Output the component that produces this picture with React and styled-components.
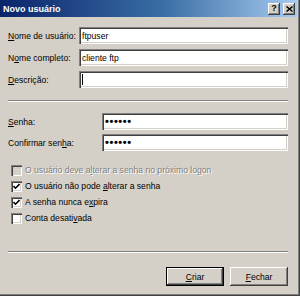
import React from "react";
import styled, { createGlobalStyle } from "styled-components";

const Global = createGlobalStyle`
  html, body { margin: 0; padding: 0; background: #d4d0c8; }
  body { font-family: "Liberation Sans", Arial, sans-serif; }
`;

const Window = styled.div`
  width: 300px;
  height: 296px;
  box-sizing: border-box;
  padding: 0 3px 3px 0;
  background: #d4d0c8;
  box-shadow: inset -1px -1px #404040, inset -2px -2px #808080;
  display: flex;
  flex-direction: column;
  font-size: 8.6px;
  color: #000;
`;

const TitleBar = styled.div`
  height: 17px;
  flex: none;
  display: flex;
  align-items: center;
  padding: 0 2px 0 3px;
  background: linear-gradient(to right, #0a246a 0%, #3a6ea5 55%, #a6caf0 100%);
`;

const Title = styled.div`
  flex: 1;
  color: #fff;
  font-weight: bold;
  font-size: 9px;
`;

const TitleButton = styled.div`
  width: 12px;
  height: 12px;
  margin-left: ${(p) => (p.$gap ? "3px" : "0")};
  box-sizing: border-box;
  background: #d4d0c8;
  box-shadow: inset -1px -1px #404040, inset 1px 1px #fff, inset -2px -2px #808080;
  display: flex;
  align-items: center;
  justify-content: center;
  font-weight: bold;
  font-size: 9px;
  line-height: 1;
`;

const Body = styled.div`
  flex: 1;
  display: flex;
  flex-direction: column;
  padding: 0 9px 7px 8px;
`;

const Grid = styled.div`
  display: grid;
  grid-template-columns: ${(p) => p.$label}px 1fr;
  grid-auto-rows: 17px;
  row-gap: ${(p) => p.$gap}px;
  margin-top: ${(p) => p.$top}px;
  align-items: center;
`;

const Label = styled.div`
  white-space: nowrap;
`;

const Field = styled.div`
  height: 17px;
  box-sizing: border-box;
  background: #fff;
  box-shadow: inset 1px 1px #808080, inset 2px 2px #404040, inset -1px -1px #fff,
    inset -2px -2px #d4d0c8;
  display: flex;
  align-items: center;
  padding-left: 3px;
  white-space: nowrap;
`;

const Dots = styled.span`
  font-size: 11px;
  font-weight: bold;
  letter-spacing: 0.6px;
  line-height: 1;
`;

const Caret = styled.span`
  width: 1px;
  height: 11px;
  background: #000;
`;

const Separator = styled.div`
  height: 0;
  border-top: 1px solid #808080;
  border-bottom: 1px solid #fff;
  margin-top: ${(p) => p.$top || "0px"};
`;

const Checks = styled.div`
  margin-top: 11px;
  display: flex;
  flex-direction: column;
`;

const CheckRow = styled.div`
  height: 16px;
  display: flex;
  align-items: center;
  padding-left: 3px;
  gap: 3px;
  color: ${(p) => (p.$disabled ? "#808080" : "#000")};
  text-shadow: ${(p) => (p.$disabled ? "1px 1px #fff" : "none")};
`;

const Box = styled.div`
  width: 11px;
  height: 11px;
  box-sizing: border-box;
  flex: none;
  background: ${(p) => (p.$disabled ? "#d4d0c8" : "#fff")};
  box-shadow: inset 1px 1px #808080, inset 2px 2px #404040, inset -1px -1px #fff,
    inset -2px -2px #d4d0c8;
  display: flex;
  align-items: center;
  justify-content: center;
`;

const Buttons = styled.div`
  display: flex;
  justify-content: flex-end;
  gap: 6px;
  margin-top: 14px;
`;

const Button = styled.div`
  width: 58px;
  height: 19px;
  box-sizing: border-box;
  background: #d4d0c8;
  display: flex;
  align-items: center;
  justify-content: center;
  box-shadow: ${(p) =>
    p.$default
      ? "inset 0 0 0 1px #000, inset -2px -2px #404040, inset 2px 2px #fff, inset -3px -3px #808080"
      : "inset -1px -1px #404040, inset 1px 1px #fff, inset -2px -2px #808080"};
`;

const Check = () => (
  <svg width="7" height="7" viewBox="0 0 7 7">
    <polyline points="0.5,3 2.5,5.2 6.5,1" fill="none" stroke="#000" strokeWidth="1.6" />
  </svg>
);

const CheckItem = ({ checked, disabled, children }) => (
  <CheckRow $disabled={disabled}>
    <Box $disabled={disabled}>{checked && <Check />}</Box>
    <span>{children}</span>
  </CheckRow>
);

export default function App() {
  return (
    <>
      <Global />
      <Window>
        <TitleBar>
          <Title>Novo usuário</Title>
          <TitleButton>?</TitleButton>
          <TitleButton $gap>
            <svg width="7" height="6" viewBox="0 0 7 6">
              <path d="M0.5 0.5 L6.5 5.5 M6.5 0.5 L0.5 5.5" stroke="#000" strokeWidth="1.5" />
            </svg>
          </TitleButton>
        </TitleBar>
        <Body>
          <Grid $label={71} $gap={5} $top={10}>
            <Label>
              <u>N</u>ome de usuário:
            </Label>
            <Field>ftpuser</Field>
            <Label>
              N<u>o</u>me completo:
            </Label>
            <Field>cliente ftp</Field>
            <Label>
              <u>D</u>escrição:
            </Label>
            <Field>
              <Caret />
            </Field>
          </Grid>
          <Separator $top="12px" />
          <Grid $label={94} $gap={4} $top={11}>
            <Label>
              <u>S</u>enha:
            </Label>
            <Field>
              <Dots>••••••</Dots>
            </Field>
            <Label>
              Confirmar sen<u>h</u>a:
            </Label>
            <Field>
              <Dots>••••••</Dots>
            </Field>
          </Grid>
          <Checks>
            <CheckItem disabled>
              O usuário deve a<u>l</u>terar a senha no próximo logon
            </CheckItem>
            <CheckItem checked>
              O usuário não pode <u>a</u>lterar a senha
            </CheckItem>
            <CheckItem checked>
              A senha nunca e<u>x</u>pira
            </CheckItem>
            <CheckItem>
              Conta desati<u>v</u>ada
            </CheckItem>
          </Checks>
          <Separator $top="auto" />
          <Buttons>
            <Button $default>
              <span>
                <u>C</u>riar
              </span>
            </Button>
            <Button>
              <span>
                <u>F</u>echar
              </span>
            </Button>
          </Buttons>
        </Body>
      </Window>
    </>
  );
}
